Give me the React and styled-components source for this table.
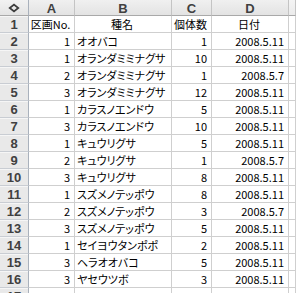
import React from "react";
import styled, { createGlobalStyle } from "styled-components";

const GlobalStyle = createGlobalStyle`
  html, body {
    margin: 0;
    padding: 0;
    background: #ffffff;
    overflow: hidden;
  }
`;

const COLUMNS = ["A", "B", "C", "D", ""];

const rows = [
  ["区画No.", "種名", "個体数", "日付"],
  [1, "オオバコ", 1, "2008.5.11"],
  [1, "オランダミミナグサ", 10, "2008.5.11"],
  [2, "オランダミミナグサ", 1, "2008.5.7"],
  [3, "オランダミミナグサ", 12, "2008.5.11"],
  [1, "カラスノエンドウ", 5, "2008.5.11"],
  [3, "カラスノエンドウ", 10, "2008.5.11"],
  [1, "キュウリグサ", 5, "2008.5.11"],
  [2, "キュウリグサ", 1, "2008.5.7"],
  [3, "キュウリグサ", 8, "2008.5.11"],
  [1, "スズメノテッポウ", 8, "2008.5.11"],
  [2, "スズメノテッポウ", 3, "2008.5.7"],
  [3, "スズメノテッポウ", 5, "2008.5.11"],
  [1, "セイヨウタンポポ", 2, "2008.5.11"],
  [3, "ヘラオオバコ", 5, "2008.5.11"],
  [3, "ヤセウツボ", 3, "2008.5.11"],
  ["", "", "", ""],
];

const App = () => {
  return (
    <>
      <GlobalStyle />
      <Sheet>
        <Corner>
          <Diamond />
        </Corner>
        {COLUMNS.map((col, i) => (
          <ColHeader key={i} last={i === COLUMNS.length - 1}>
            {col}
          </ColHeader>
        ))}
        {rows.map((row, r) => (
          <React.Fragment key={r}>
            <RowHeader>{r + 1}</RowHeader>
            {row.map((value, c) => {
              const isHead = r === 0;
              const align = isHead ? "center" : c === 1 ? "left" : "right";
              return (
                <Cell key={c} align={align}>
                  {value}
                </Cell>
              );
            })}
            <Cell align="left" />
          </React.Fragment>
        ))}
      </Sheet>
    </>
  );
};

const Sheet = styled.div`
  display: grid;
  grid-template-columns: 29px 46px 97px 40px 77px 1fr;
  grid-template-rows: 16px;
  grid-auto-rows: 17px;
  width: 296px;
  height: 293px;
  overflow: hidden;
  background: #ffffff;
`;

const Corner = styled.div`
  box-sizing: border-box;
  display: flex;
  align-items: center;
  justify-content: center;
  background: linear-gradient(#f2f2f2, #e4e4e4);
  border-right: 1px solid #a9b1bc;
  border-bottom: 1px solid #a9a9a9;
`;

// the select-all glyph: a flattened outline diamond
const Diamond = styled.div`
  width: 4px;
  height: 4px;
  border: 2px solid #3c3c3c;
  transform: scaleY(0.8) rotate(45deg);
`;

const ColHeader = styled.div`
  box-sizing: border-box;
  display: flex;
  align-items: center;
  justify-content: center;
  background: ${({ last }) =>
    last ? "linear-gradient(#f4f4f4, #ebebeb)" : "linear-gradient(#f0f0f0, #e3e3e3)"};
  border-right: 1px solid #c4c4c4;
  border-bottom: 1px solid #a9a9a9;
  font-family: "Liberation Sans", Arial, sans-serif;
  font-weight: bold;
  font-size: 13px;
  color: #404040;
  padding-top: 1px;
`;

const RowHeader = styled.div`
  box-sizing: border-box;
  display: flex;
  align-items: center;
  justify-content: center;
  background: #e9e9e9;
  border-right: 1px solid #a9b1bc;
  border-bottom: 1px solid #c9cdd3;
  box-shadow: inset 0 1px 0 #f6f6f6;
  font-family: "Liberation Sans", Arial, sans-serif;
  font-weight: bold;
  font-size: 13px;
  color: #404040;
`;

const Cell = styled.div`
  box-sizing: border-box;
  display: flex;
  align-items: center;
  justify-content: ${({ align }) =>
    align === "left" ? "flex-start" : align === "center" ? "center" : "flex-end"};
  padding: 0 4px 0 2px;
  border-right: 1px solid #cfcfcf;
  border-bottom: 1px solid #cfcfcf;
  font-family: "Noto Sans CJK JP", "Liberation Sans", sans-serif;
  font-feature-settings: "palt";
  font-size: 11px;
  color: #000000;
  white-space: nowrap;
  overflow: visible;
  line-height: 1;
`;

export default App;
